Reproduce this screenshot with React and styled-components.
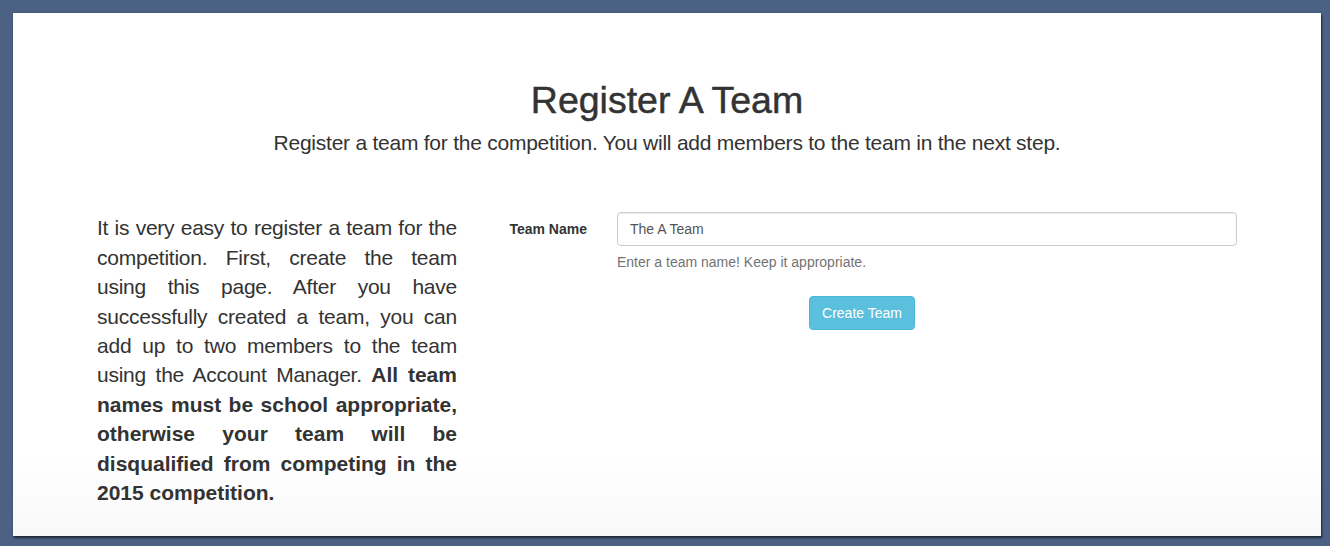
import React from "react";
import styled, { createGlobalStyle } from "styled-components";

const Global = createGlobalStyle`
  html, body { margin: 0; padding: 0; }
  body {
    background: #4b6285;
    font-family: "Liberation Sans", Arial, Helvetica, sans-serif;
    color: #333;
    font-size: 14px;
    line-height: 1.42857;
    overflow: hidden;
  }
  * { box-sizing: border-box; }
`;

const Page = styled.div`
  padding: 13px 9px 10px 13px;
  height: 546px;
`;

const Card = styled.div`
  width: 1308px;
  height: 523px;
  background: linear-gradient(to bottom, #ffffff 85%, #f8f8f8 100%);
  box-shadow: 1px 2px 2px rgba(0, 0, 0, 0.6), 0 0 1px rgba(0, 0, 0, 0.4);
  padding-top: 67px;
`;

const Container = styled.div`
  width: 1170px;
  margin: 0 auto;
  padding: 0 15px;
`;

const Header = styled.header`
  text-align: center;
`;

const Title = styled.h1`
  margin: 0;
  font-size: 37.5px;
  line-height: 41px;
  font-weight: 400;
  -webkit-text-stroke: 0.5px #333;
  color: #333;
`;

const Lead = styled.p`
  margin: 7px 0 0;
  font-size: 21px;
  line-height: 1.4;
  letter-spacing: -0.24px;
`;

const Row = styled.div`
  display: grid;
  grid-template-columns: 390px 780px;
  margin: 55px -15px 0;
`;

const Col = styled.div`
  padding: 0 15px;
`;

const Intro = styled.p`
  margin: 1px 0 0;
  font-size: 21px;
  line-height: 1.4;
  text-align: justify;
  letter-spacing: -0.24px;
  color: #333;
`;

const Strong = styled.strong`
  font-weight: 700;
  letter-spacing: 0;
`;

const FormGroup = styled.div`
  display: grid;
  grid-template-columns: 130px 650px;
  margin: 0 -15px;
`;

const Label = styled.label`
  padding: 7px 15px 0;
  text-align: right;
  font-weight: 700;
  font-size: 14px;
  line-height: 20px;
`;

const Field = styled.div`
  padding: 0 15px;
`;

const Input = styled.input`
  display: block;
  width: 100%;
  height: 34px;
  padding: 6px 12px;
  font-family: inherit;
  font-size: 14px;
  line-height: 20px;
  color: #555;
  background: #fff;
  border: 1px solid #ccc;
  border-radius: 4px;
  box-shadow: inset 0 1px 1px rgba(0, 0, 0, 0.075);
  outline: none;
`;

const Help = styled.span`
  display: block;
  margin-top: 6px;
  color: #737373;
  font-size: 14px;
  line-height: 20px;
`;

const Actions = styled.div`
  display: flex;
  justify-content: center;
  margin-top: 24px;
`;

const Button = styled.button`
  height: 34px;
  padding: 6px 12px;
  font-family: inherit;
  font-size: 14px;
  line-height: 20px;
  color: #fff;
  background: #5bc0de;
  border: 1px solid #46b8da;
  border-radius: 4px;
  cursor: pointer;
`;

export default function App() {
  return (
    <>
      <Global />
      <Page>
        <Card>
          <Container>
            <Header>
              <Title>Register A Team</Title>
              <Lead>
                Register a team for the competition. You will add members to the team in the next step.
              </Lead>
            </Header>
            <Row>
              <Col>
                <Intro>
                  It is very easy to register a team for the competition. First, create the team
                  using this page. After you have successfully created a team, you can add up to
                  two members to the team using the Account Manager.{" "}
                  <Strong>
                    All team names must be school appropriate, otherwise your team will be
                    disqualified from competing in the 2015 competition.
                  </Strong>
                </Intro>
              </Col>
              <Col>
                <FormGroup>
                  <Label htmlFor="team-name">Team Name</Label>
                  <Field>
                    <Input id="team-name" defaultValue="The A Team" />
                    <Help>Enter a team name! Keep it appropriate.</Help>
                  </Field>
                </FormGroup>
                <Actions>
                  <Button type="button">Create Team</Button>
                </Actions>
              </Col>
            </Row>
          </Container>
        </Card>
      </Page>
    </>
  );
}
